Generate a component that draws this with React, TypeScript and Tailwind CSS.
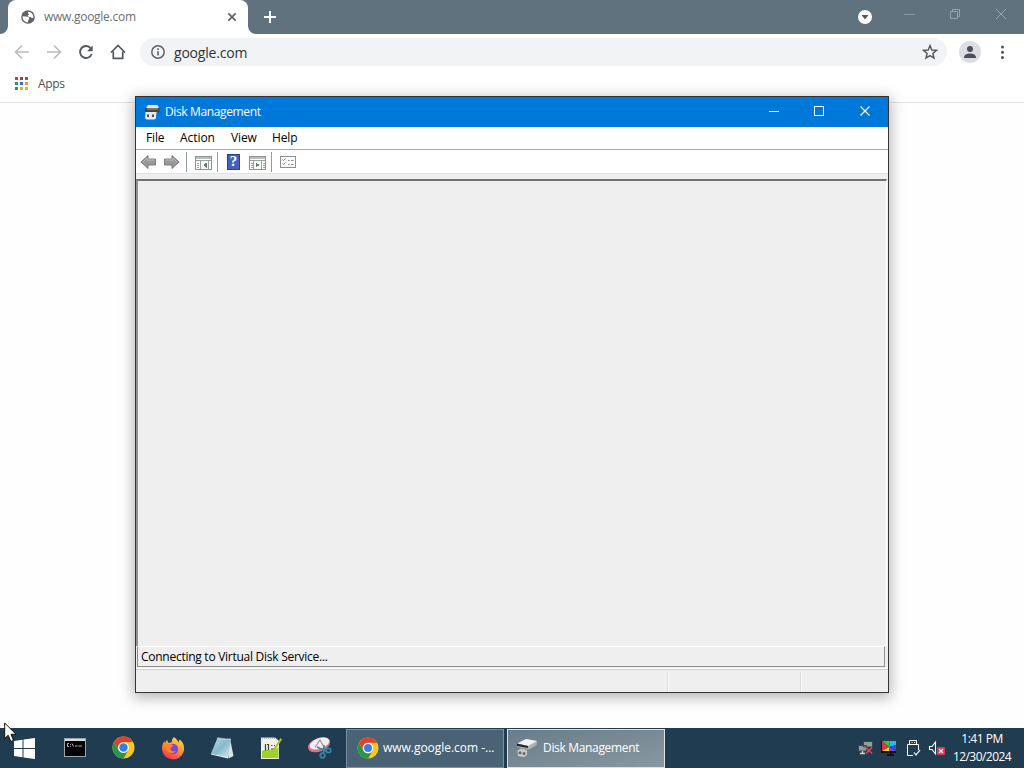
import type { ReactNode } from "react";

function GlobeIcon() {
  return (
    <svg width="14" height="14" viewBox="0 0 14 14">
      <circle cx="7" cy="7" r="6.8" fill="#5f6368" />
      <path d="M1.6 6.2 4.6 6.4 7.2 6.8 8.4 8 7.6 9.6 6.6 12.4C3.600 12.200 1.400 9.600 1.600 6.200Z" fill="#fff" />
      <path d="M7.200 1.700C10.200 1.800 12.500 4.200 12.400 7.400L11 8.200 9.600 7 8 7 6.600 5.600 8.200 4.600 7 3.400Z" fill="#fff" />
    </svg>
  );
}

function ChromeLogo({ size }: { size: number }) {
  return (
    <svg width={size} height={size} viewBox="0 0 48 48">
      <circle cx="24" cy="24" r="23" fill="#fbc723" />
      <path d="M4.1 12.5A23 23 0 0 1 43.9 12.5H24A11.5 11.5 0 0 0 14 29.8Z" fill="#e2402f" />
      <path d="M4.1 12.5 14 29.8A11.5 11.5 0 0 0 34 29.8L24 47A23 23 0 0 1 4.1 12.5Z" fill="#27964a" />
      <circle cx="24" cy="24" r="11.2" fill="#fff" />
      <circle cx="24" cy="24" r="8.8" fill="#3b7de8" />
    </svg>
  );
}

function TerminalIcon() {
  return (
    <svg width="22" height="19" viewBox="0 0 22 19">
      <rect width="22" height="19" fill="#9aa6ab" />
      <rect x="1" y="1" width="20" height="2" fill="#d5dcdf" />
      <rect x="1" y="3" width="20" height="15" fill="#050505" />
      <path d="M5 5.500H3.500V8.500H5M6.500 6v.8M6.500 8v.8M8 5.500 9.500 8.500M11 8H13.500M14.500 8H18" stroke="#c8c8c8" strokeWidth="0.900" fill="none" />
    </svg>
  );
}

function FirefoxIcon() {
  return (
    <svg width="24" height="24" viewBox="0 0 24 24">
      <defs>
        <linearGradient id="ffBody" x1="0.8" y1="0" x2="0.3" y2="1">
          <stop offset="0" stopColor="#ffe04a" />
          <stop offset="0.45" stopColor="#ff9a2e" />
          <stop offset="1" stopColor="#f0305a" />
        </linearGradient>
      </defs>
      <path d="M12.8 1C16 3 16.800 5 17.600 6.400L18.400 3.600C22 6 23.600 10 23 14 22 19.600 17.600 23.400 12 23.400 5.800 23.400 1 18.600 1 12.600 1 9.600 1.800 7.200 3.400 5L4 7.200 6 3.600 7.200 6.800 10.600 6.600C10.800 4.400 11.400 2.600 12.800 1Z" fill="url(#ffBody)" />
      <circle cx="12" cy="13" r="5.2" fill="#7a48d8" />
      <path d="M5 8.400C7.600 7 9.600 8.200 12.400 9.200 12 11 9.800 11 9.400 12.400 9.200 15 12.400 16.200 15 14.800 13 18.800 6.400 17.600 5.600 13Z" fill="#ff8427" />
    </svg>
  );
}

function NotepadIcon() {
  return (
    <svg width="24" height="24" viewBox="0 0 24 24">
      <defs>
        <linearGradient id="pad" x1="0" y1="0" x2="1" y2="1">
          <stop offset="0" stopColor="#b9dbe6" />
          <stop offset="0.5" stopColor="#86b9cc" />
          <stop offset="1" stopColor="#d2edf3" />
        </linearGradient>
      </defs>
      <path d="M20 2.500 23.500 20 18.500 22.500 17 4Z" fill="#dfe3df" />
      <path d="M7.500 2 21 3.500 18 21.500 1 17.500Z" fill="url(#pad)" />
      <path d="M1 17.500 18 21V22.500L1 18.500Z" fill="#e9f3f4" />
      <path d="M7.500 2 21 3.500" stroke="#dbe6e9" strokeWidth="1.500" strokeDasharray="1 1" />
    </svg>
  );
}

function NotepadPlusIcon() {
  return (
    <svg width="24" height="24" viewBox="0 0 24 24">
      <path d="M2 1.500H16L20 5V23H2Z" fill="#f0f2e8" />
      <path d="M3 15C8 12 14 16 19.500 11V22H3Z" fill="#9bd32c" />
      <path d="M3 2H16" stroke="#777" strokeDasharray="1 1" />
      <path d="M6.500 8V14.500M8 8.500H9.500V14M12 9.500H13.500M15 9.500H16M12 13H16" stroke="#38442c" strokeWidth="1.200" fill="none" />
      <path d="M21.500 2 23 3.500 15.500 15 13.500 16 14 13.500Z" fill="#b3c12d" />
    </svg>
  );
}

function SnippingIcon() {
  return (
    <svg width="25" height="23" viewBox="0 0 25 23">
      <ellipse cx="12" cy="8.800" rx="11.500" ry="6.800" transform="rotate(-20 12 8.800)" fill="#d9707f" />
      <ellipse cx="12.500" cy="7.500" rx="10.300" ry="5.300" transform="rotate(-20 12.500 7.500)" fill="#f4eef2" />
      <path d="M8 11.500 13 4 18 13" stroke="#8d9ba2" strokeWidth="1.200" fill="none" />
      <circle cx="15.500" cy="19.500" r="2.300" fill="none" stroke="#3587a8" strokeWidth="1.700" />
      <circle cx="21.500" cy="14.500" r="2.200" fill="none" stroke="#3587a8" strokeWidth="1.700" />
      <path d="M10 11 19.500 15.500M17 9 16.500 17.500" stroke="#3587a8" strokeWidth="1.600" />
    </svg>
  );
}

function DriveIcon() {
  return (
    <svg width="22" height="20" viewBox="0 0 22 20">
      <path d="M1 7 10 1 21 3 20.500 7 13 11.500 1 9Z" fill="#aeb4b6" />
      <path d="M1 5.500 10 1 21 3 12 8Z" fill="#f0f2f2" />
      <path d="M1 5.500 12 8V10L1 8Z" fill="#24282b" />
      <path d="M1.500 12.500 5 10.500 11 12V17L8 19 2 18Z" fill="#c6cacb" />
      <circle cx="4" cy="14.800" r="1.500" fill="#61686c" />
      <circle cx="8" cy="15.500" r="1.500" fill="#61686c" />
    </svg>
  );
}

function DiskTitleIcon() {
  return (
    <svg width="16" height="16" viewBox="0 0 16 16">
      <path d="M4 1H13.500L15 4H2Z" fill="#e6e6e2" />
      <path d="M1 4H15.500V8H1Z" fill="#4a443e" />
      <path d="M3 5H14" stroke="#a8a39a" />
      <path d="M1.500 8H12.500L12 14.500 10.500 15.500H2.500L1 14Z" fill="#e9e8e3" />
      <rect x="3" y="10.500" width="2" height="2.500" fill="#3f5568" />
      <rect x="8" y="10.500" width="2" height="2.500" fill="#3f5568" />
    </svg>
  );
}

function ArrowIcon({ flip }: { flip?: boolean }) {
  return (
    <svg width="17" height="16" viewBox="0 0 17 16" className={flip ? "-scale-x-100" : undefined}>
      <path d="M1 8 8 1.500V5H15.500V11H8V14.500Z" fill="#999" stroke="#7c7c7c" />
      <path d="M3 8 7 4.200V6H14.500" stroke="#bcbcbc" fill="none" />
    </svg>
  );
}

function PaneIcon({ right }: { right?: boolean }) {
  return (
    <svg width="17" height="14" viewBox="0 0 17 14" shapeRendering="crispEdges">
      <rect x="0.500" y="0.500" width="16" height="13" fill="#fafafa" stroke="#8a9490" />
      <path d="M1 2H16" stroke="#b9c0bc" strokeWidth="2" />
      <path d="M1 4.500H16" stroke="#9ba5a0" />
      {right ? (
        <path d="M12.500 5V13M4.500 5V13M2 7.500H4M2 9.500H4M2 11.500H4M14 7.500H16M14 9.500H16M14 11.500H16" stroke="#9ba5a0" />
      ) : (
        <path d="M5.500 5V13M2 7.500H4M2 9.500H4M2 11.500H4M13.500 5V13" stroke="#9ba5a0" />
      )}
      <path d={right ? "M7 6.500V11.500L10.500 9Z" : "M11.500 6.500V11.500L8 9Z"} fill="#5c8567" />
    </svg>
  );
}

function ChecklistIcon() {
  return (
    <svg width="16" height="12" viewBox="0 0 16 12">
      <rect x="0.500" y="0.500" width="15" height="11" fill="#fafafa" stroke="#8e8e98" />
      <path d="M2.500 3.500 3.500 4.500 5.500 2.500M2.500 7.500 3.500 8.500 5.500 6.500" stroke="#6f7fa5" fill="none" />
      <path d="M8 4.500H9.500M11 4.500H13.500M8 8.500H9.500M11 8.500H13.500" stroke="#8b8b8b" />
    </svg>
  );
}

const appColors = ["#c5403c", "#a83a48", "#c5403c", "#3a8e5c", "#3c6fc0", "#d8a02c", "#3a8e5c", "#d8b52c", "#d8b52c"];

function AppsGrid() {
  return (
    <div className="grid grid-cols-3 gap-[2px]">
      {appColors.map((c, i) => (
        <span key={i} className="h-[3px] w-[3px]" style={{ backgroundColor: c }} />
      ))}
    </div>
  );
}

function Browser() {
  return (
    <>
      <div className="flex h-[34px] bg-[#60727e]">
        <div className="w-2 bg-white">
          <div className="h-full rounded-br-lg bg-[#60727e]" />
        </div>
        <div className="bg-[#60727e]">
          <div className="flex h-full w-[240px] items-center rounded-t-lg bg-white pl-[13px] pr-[11px]">
            <GlobeIcon />
            <span className="ml-[9px] flex-1 text-[12px] tracking-[-0.27px] text-[#6b6f73]">www.google.com</span>
            <svg width="10" height="10" viewBox="0 0 10 10">
              <path d="M1.300 1.300 8.700 8.700M8.700 1.300 1.300 8.700" stroke="#5f6368" strokeWidth="1.700" />
            </svg>
          </div>
        </div>
        <div className="w-2 bg-white">
          <div className="h-full rounded-bl-lg bg-[#60727e]" />
        </div>
        <svg width="14" height="34" viewBox="0 0 14 34" className="ml-[7px]">
          <path d="M7 11V23M1 17H13" stroke="#fff" strokeWidth="2" />
        </svg>
        <div className="flex-1" />
        <svg width="167" height="34" viewBox="0 0 167 34">
          <circle cx="8" cy="17" r="7" fill="#fff" />
          <path d="M4.500 15H11.500L8 19.500Z" fill="#4b5a64" />
          <path d="M47 14.500H58" stroke="#8997a0" />
          <path d="M93.500 11.500H100.500V18.500H93.500ZM95.500 11V9.500H102.500V16.500H101" fill="none" stroke="#9ba8af" strokeWidth="0.900" />
          <path d="M139 9 149 19M149 9 139 19" stroke="#98a5ad" />
        </svg>
      </div>
      <div className="flex h-9 items-center bg-white">
        <svg width="126" height="36" viewBox="0 0 126 36" className="mr-[14px]" fill="none">
          <path d="M29 18H16M22 11.500 15.500 18 22 24.500" stroke="#b9bbbd" strokeWidth="1.600" />
          <path d="M47 18H60M54 11.500 60.500 18 54 24.500" stroke="#b9bbbd" strokeWidth="1.600" />
          <path d="M90.800 14.300A6 6 0 1 0 91.700 20" stroke="#55595e" strokeWidth="1.900" />
          <path d="M92.700 11.500V17.200H87Z" fill="#55595e" />
          <path d="M111 18.500 118 11.500 125 18.500M113.300 17.500V24.300H122.700V17.500" stroke="#55595e" strokeWidth="1.700" />
        </svg>
        <div className="flex h-7 w-[807px] items-center rounded-full bg-[#f1f3f4] pl-[11px] pr-[9px]">
          <svg width="14" height="14" viewBox="0 0 14 14">
            <circle cx="7" cy="7" r="6.200" fill="none" stroke="#5f6368" strokeWidth="1.500" />
            <path d="M7 6.200V10.500M7 3.300V4.900" stroke="#5f6368" strokeWidth="1.600" />
          </svg>
          <span className="ml-[9px] flex-1 text-[14px] tracking-[-0.2px] text-[#303338]">google.com</span>
          <svg width="16" height="16" viewBox="0 0 16 16">
            <path d="M8 1.600 9.800 6 14.500 6.400 10.900 9.500 12 14.100 8 11.600 4 14.100 5.100 9.500 1.500 6.400 6.200 6Z" fill="none" stroke="#505459" strokeWidth="1.400" />
          </svg>
        </div>
        <svg width="22" height="22" viewBox="0 0 22 22" className="ml-3">
          <circle cx="11" cy="11" r="11" fill="#dddee4" />
          <circle cx="11" cy="8" r="3" fill="#4b4e5c" />
          <path d="M5 16.500C5 11.200 17 11.200 17 16.500V17H5Z" fill="#4b4e5c" />
        </svg>
        <svg width="6" height="16" viewBox="0 0 6 16" className="ml-[18px]">
          <circle cx="3.500" cy="3" r="1.500" fill="#505459" />
          <circle cx="3.500" cy="8.200" r="1.500" fill="#505459" />
          <circle cx="3.500" cy="13.400" r="1.500" fill="#505459" />
        </svg>
      </div>
      <div className="flex h-[33px] items-center border-b border-[#dfe1e3] bg-white pb-[5px] pl-[15px]">
        <AppsGrid />
        <span className="ml-[10px] text-[12px] tracking-[-0.3px] text-[#4d5156]">Apps</span>
      </div>
      <div className="flex-1 bg-[#fefefe]" />
    </>
  );
}

function Separator() {
  return <div className="h-5 w-px bg-[#8f9ba3]" />;
}

function DiskWindow() {
  return (
    <div className="absolute left-[135px] top-[96px] flex h-[597px] w-[754px] flex-col border border-[#303438] bg-[#efefef] shadow-[0_3px_13px_2px_rgba(0,0,0,0.28)]">
      <div className="flex h-[30px] items-center bg-[#0078d9] pl-[8px] text-white">
        <DiskTitleIcon />
        <span className="ml-[5px] flex-1 text-[12px] tracking-[-0.37px]">Disk Management</span>
        <svg width="120" height="30" viewBox="0 0 120 30" fill="none" stroke="#fff">
          <path d="M1 14.500H11M46.500 9.500H55.500V18.500H46.500Z" shapeRendering="crispEdges" />
          <path d="M92.500 9.500 101.500 18.500M101.500 9.500 92.500 18.500" strokeWidth="1.200" />
        </svg>
      </div>
      <div className="flex h-[23px] items-center border-b border-[#a8a8a8] bg-white pl-[10px] text-[12px] tracking-[-0.15px] text-black">
        <span className="w-[34px]">File</span>
        <span className="w-[51px] tracking-[-0.05px]">Action</span>
        <span className="w-[41px]">View</span>
        <span>Help</span>
      </div>
      <div className="flex h-[23px] items-center bg-white pl-1">
        <ArrowIcon />
        <div className="w-[6px]" />
        <ArrowIcon flip />
        <div className="w-[6px]" />
        <Separator />
        <div className="ml-2 pt-[2px]"><PaneIcon /></div>
        <div className="ml-[5px]"><Separator /></div>
        <div className="ml-[9px] flex h-4 w-[13px] items-center justify-center border border-[#28408e] bg-[#4361bd] font-['Liberation_Serif',serif] text-[15px] font-bold text-white">?</div>
        <div className="ml-[9px] mr-[5px] pt-[2px]"><PaneIcon right /></div>
        <Separator />
        <div className="ml-2"><ChecklistIcon /></div>
      </div>
      <div className="h-[6px] border-t border-[#e2e2e2]" />
      <div className="mr-px h-[467px] border-l-2 border-r border-t-2 border-l-[#929292] border-r-white border-t-[#707070]" />
      <div className="mr-px flex h-[21px] pl-px pr-[2px]">
        <div className="flex flex-1 items-center border border-b-[#8f8f8f] border-l-[#8a8a8a] border-r-[#8f8f8f] border-t-white pl-[3px] text-[12px] tracking-[-0.265px] text-black">
          Connecting to Virtual Disk Service...
        </div>
      </div>
      <div className="mt-px border-b border-t border-b-[#cfcfcf] border-t-white" />
      <div className="flex flex-1 pt-[2px]">
        <div className="w-[532px] border-r border-[#dcdcdc]" />
        <div className="w-[133px] border-l border-r border-l-[#fafafa] border-r-[#dcdcdc]" />
        <div className="flex-1 border-l border-[#fafafa]" />
      </div>
    </div>
  );
}

function Launcher({ children }: { children: ReactNode }) {
  return <div className="flex h-full w-[49px] items-center justify-center">{children}</div>;
}

function TrayIcons() {
  return (
    <svg width="88" height="20" viewBox="0 0 88 20" fill="none">
      <path d="M5.500 3.500H14.500V9H5.500ZM0.500 7.500H8.500V13H0.500Z" fill="#9b9c98" stroke="#34474f" />
      <path d="M2 15.500H7M4.500 13V15" stroke="#d6d6d2" strokeWidth="1.400" />
      <path d="M8 9.500 14 15.500M14 9.500 8 15.500" stroke="#e3424e" strokeWidth="1.700" />
      <rect x="23" y="3" width="15" height="12" fill="#111" />
      <path d="M24 3 31 9 24 13Z" fill="#ec2f39" />
      <path d="M24 3H32L31 9Z" fill="#35c53d" />
      <path d="M32 3H38V7L31 9Z" fill="#23bfe8" />
      <path d="M38 7V13L31 9Z" fill="#2455e8" />
      <path d="M38 13H31V9Z" fill="#8f3ce0" />
      <path d="M31 13H24L31 9Z" fill="#f4d52b" />
      <path d="M33 14V17M29 17H36" stroke="#111" strokeWidth="2" />
      <path d="M51.500 6.500V2.500H58.500V6.500M49.500 6.500H60.500V12M49.500 6.500V17.500H55M53.500 4.500H54.500M56 4.500H57" stroke="#fff" />
      <path d="M56 14.500 58 17 62 12" stroke="#d9e0e4" strokeWidth="1.300" />
      <path d="M71.500 8.500H74L77.500 4V16L74 11.500H71.500Z" stroke="#fff" strokeWidth="1.100" />
      <rect x="79" y="9" width="8" height="8" rx="1" fill="#d83c4c" />
      <path d="M81 11 85 15M85 11 81 15" stroke="#fff" strokeWidth="1.200" />
    </svg>
  );
}

function Taskbar() {
  return (
    <div className="flex h-10 items-center bg-[#203c50] text-white">
      <div className="flex w-[49px] justify-center pr-px">
        <svg width="21" height="21" viewBox="0 0 21 21" fill="#fff">
          <path d="M0 3 8.500 1.800V10H0ZM9.500 1.600 21 0V10H9.500ZM0 11H8.500V19.200L0 18ZM9.500 11H21V21L9.500 19.400Z" />
        </svg>
      </div>
      <div className="flex h-full items-center pb-px pl-px">
        <Launcher><TerminalIcon /></Launcher>
        <Launcher><ChromeLogo size={23} /></Launcher>
        <Launcher><FirefoxIcon /></Launcher>
        <Launcher><NotepadIcon /></Launcher>
        <Launcher><NotepadPlusIcon /></Launcher>
        <Launcher><SnippingIcon /></Launcher>
      </div>
      <div className="ml-[2px] mt-px flex h-[39px] w-[158px] items-center border border-[#7d919c] bg-[#4a6374] pb-px pl-[10px]">
        <ChromeLogo size={22} />
        <span className="ml-1 text-[12px] tracking-[-0.03px]">www.google.com -...</span>
      </div>
      <div className="ml-[3px] mt-px flex h-[39px] w-[158px] items-center border border-[#dce2e4] bg-gradient-to-br from-[#697c89] to-[#8998a1] pb-px pl-[8px]">
        <DriveIcon />
        <span className="ml-[5px] text-[12px] tracking-[-0.33px]">Disk Management</span>
      </div>
      <div className="flex-1" />
      <TrayIcons />
      <div className="ml-[2px] mr-[8px] w-[68px] text-center text-[12px] leading-[18px]">
        <div className="tracking-[-0.5px]">1:41 PM</div>
        <div className="-mx-2 tracking-[-0.55px]">12/30/2024</div>
      </div>
    </div>
  );
}

export default function App() {
  return (
    <div className="relative flex h-[768px] w-[1024px] flex-col overflow-hidden whitespace-nowrap bg-white font-['Open_Sans','Noto_Sans',sans-serif]">
      <Browser />
      <DiskWindow />
      <Taskbar />
      <svg width="13" height="21" viewBox="0 0 13 21" className="absolute left-[4px] top-[722px]">
        <path d="M0.700 1V16.500L4.200 13.200 6.800 19.500 9.500 18.400 7 12.300H12Z" fill="#fff" stroke="#111" strokeWidth="1" />
      </svg>
    </div>
  );
}
